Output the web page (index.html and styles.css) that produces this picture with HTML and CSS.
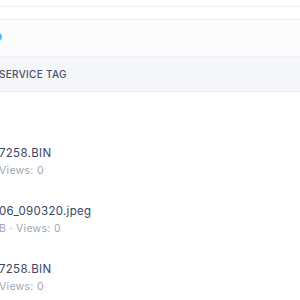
FILE: index.html
```html
<!DOCTYPE html>
<html lang="en">
<head>
    <meta charset="UTF-8">
    <meta name="viewport" content="width=device-width, initial-scale=1.0">
    <title>Files</title>
    <link rel="stylesheet" href="styles.css">
</head>
<body>

    <!-- Top bar edge -->
    <div class="topbar"></div>

    <!-- Toolbar strip -->
    <div class="toolbar"></div>

    <!-- Filter row -->
    <div class="filters">
        <span class="status-dot"></span>
    </div>

    <!-- Table header -->
    <div class="table-head">
        <span class="col-title">SERVICE TAG</span>
    </div>

    <!-- File rows -->
    <div class="table-body">
        <div class="file-row">
            <div class="file-name">7258.BIN</div>
            <div class="file-meta">Views: 0</div>
        </div>
        <div class="file-row">
            <div class="file-name">06_090320.jpeg</div>
            <div class="file-meta">B · Views: 0</div>
        </div>
        <div class="file-row">
            <div class="file-name">7258.BIN</div>
            <div class="file-meta">Views: 0</div>
        </div>
    </div>

</body>
</html>
```

FILE: styles.css
```css
* {
    margin: 0;
    padding: 0;
    box-sizing: border-box;
}

body, html {
    height: 100%;
    font-family: Inter, "Open Sans", sans-serif;
    background-color: #ffffff;
    overflow: hidden;
}

/* Top bar edge with soft shadow */
.topbar {
    height: 7px;
    background-color: #ffffff;
    border-bottom: 1px solid #f0f0f3;
    box-shadow: 0 1px 2px rgba(0, 0, 0, 0.03);
}

.toolbar {
    height: 13px;
    background-color: #ffffff;
    border-bottom: 1px solid #ecedf3;
}

/* Filter row */
.filters {
    height: 36px;
    background-color: #fcfcfd;
    display: flex;
    align-items: center;
}

.status-dot {
    width: 8px;
    height: 8px;
    border-radius: 50%;
    background-color: #3fc6f4;
    margin-left: -6px;
    margin-top: -2px;
}

/* Table header */
.table-head {
    height: 36px;
    background-color: #f5f6fa;
    border-top: 1px solid #f0f1f5;
    border-bottom: 1px solid #eaecf1;
    display: flex;
    align-items: center;
}

.col-title {
    font-size: 10px;
    font-weight: 500;
    color: #4a5068;
    margin-left: -1px;
    letter-spacing: 0.3px;
}

/* File rows */
.table-body {
    padding-top: 41px;
}

.file-row {
    height: 58px;
    display: flex;
    flex-direction: column;
    justify-content: center;
}

.file-name {
    font-size: 11.5px;
    line-height: 17px;
    color: #3b4562;
    margin-left: -1px;
    letter-spacing: 0.3px;
}

.file-meta {
    font-size: 10.5px;
    line-height: 17px;
    color: #a1a5b1;
    margin-left: -1px;
    letter-spacing: 0.3px;
}
```
